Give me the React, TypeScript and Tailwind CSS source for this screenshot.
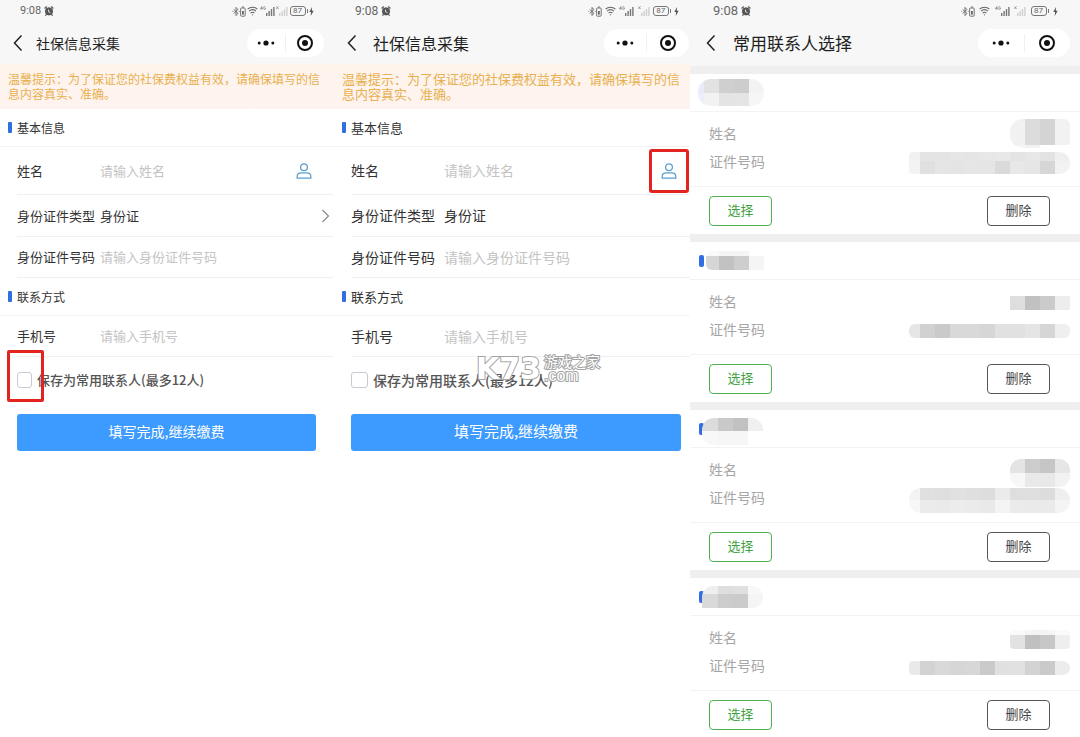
import React from 'react';
import { clsx } from 'clsx';

type Size = 'sm' | 'md' | 'lg';

const statusBar: Record<Size, string> = {
    sm: 'pl-5 pr-5 text-[11px]',
    md: 'pl-[21px] pr-[11px] text-xs',
    lg: 'pl-[23px] pr-[22px] text-[13px]',
};

const statusIcons: Record<Size, string> = {
    sm: 'w-[82px]',
    md: 'w-[91px]',
    lg: 'w-[97px]',
};

const navBar: Record<Size, string> = {
    sm: 'pl-3 pr-[10px] gap-3 h-[42px]',
    md: 'pl-3 pr-px gap-[15px] h-[42px]',
    lg: 'pl-[15px] pr-[10px] gap-4 h-11 pb-0.5',
};

const navTitle: Record<Size, string> = {
    sm: 'text-[14px]',
    md: 'text-[16px]',
    lg: 'text-[17px]',
};

const capsule: Record<Size, string> = {
    sm: 'w-[77px]',
    md: 'w-[85px]',
    lg: 'w-[92px]',
};

const SignalBars = ({ color }: { color: string }) => (
    <svg width="9" height="9" viewBox="0 0 9 9" fill={color}>
        <rect x="0" y="6" width="1.4" height="3" />
        <rect x="2.4" y="4" width="1.4" height="5" />
        <rect x="4.8" y="2" width="1.4" height="7" />
        <rect x="7.2" y="0" width="1.4" height="9" />
    </svg>
);

const StatusBar = ({ size }: { size: Size }) => (
    <div className={clsx('flex h-[22px] items-center justify-between text-[#666]', statusBar[size])}>
        <div className="flex items-center gap-[3px]">
            <span className="font-['Roboto',sans-serif]">9:08</span>
            <svg width="10" height="10" viewBox="0 0 10 10" fill="none" stroke="#555">
                <circle cx="5" cy="5.4" r="3.6" fill="#555" />
                <path d="M0.6 2.4L2.8 0.6M9.4 2.4L7.2 0.6M1.4 9.6l1.2-1.2M8.6 9.6l-1.2-1.2" strokeWidth="1.3" />
                <path d="M4.6 3.6v2.2l1.8 0.8" stroke="#f7f7f7" strokeWidth="0.9" />
            </svg>
        </div>
        <div className={clsx('flex items-center justify-between', statusIcons[size])}>
            <div className="flex items-center">
                <svg width="8" height="11" viewBox="0 0 8 11" fill="none" stroke="#666" strokeWidth="0.9">
                    <path d="M1.6 3.4l4.4 4L4 9.6V1.4L6 3.6l-4.4 4" />
                    <path d="M0.5 5.5h0.8M6.8 5.5h0.8" strokeWidth="1.1" />
                </svg>
                <svg width="6" height="11" viewBox="0 0 6 11" fill="none" stroke="#666" strokeWidth="0.9">
                    <rect x="0.6" y="2" width="4.6" height="8.2" rx="0.8" />
                    <path d="M2 1h2" />
                    <rect x="2" y="5" width="1.8" height="3.6" fill="#666" stroke="none" />
                </svg>
            </div>
            <svg width="11" height="10" viewBox="0 0 11 10" fill="none" stroke="#666" strokeWidth="1.1">
                <path d="M0.6 3.2c2.8-2.6 7-2.6 9.8 0M2.1 5.2c2-1.8 4.8-1.8 6.8 0M3.6 7.1c1.1-1 2.7-1 3.8 0" />
                <circle cx="5.5" cy="8.8" r="0.6" fill="#666" stroke="none" />
            </svg>
            <div className="flex items-end">
                <svg width="6" height="10" viewBox="0 0 6 10" fill="none" stroke="#777" strokeWidth="0.7">
                    <path d="M1.8 3.6V0.6L0.4 2.7h2M5.4 1.1c-1.2-1-2.1-0.2-2.1 1s1.2 1.9 2.1 1V2.1H4.6" />
                </svg>
                <SignalBars color="#777" />
            </div>
            <div className="flex items-end">
                <svg width="3" height="10" viewBox="0 0 3 10" stroke="#888" strokeWidth="0.8">
                    <path d="M0.3 0.4l2.2 2.6M2.5 0.4L0.3 3" />
                </svg>
                <SignalBars color="#cfcfcf" />
            </div>
            <div className="flex items-center gap-px">
                <span className="flex h-[10px] w-4 items-center justify-center rounded-[3px] border border-[#777] font-['Roboto',sans-serif] text-[8px] leading-none">
                    87
                </span>
                <span className="h-1 w-px bg-[#777]" />
            </div>
            <svg width="5" height="9" viewBox="0 0 5 9" fill="#555">
                <path d="M3 0L0.3 5h1.8L1.7 9 4.7 3.8H2.8z" />
            </svg>
        </div>
    </div>
);

const NavBar = ({ size, title }: { size: Size; title: string }) => (
    <div className={clsx('flex items-center', navBar[size])}>
        <button type="button" aria-label="返回" className="shrink-0">
            <svg width="12" height="18" viewBox="0 0 12 18" fill="none" stroke="#222" strokeWidth="1.5">
                <path d="M9.5 1.5L2.5 9l7 7.5" />
            </svg>
        </button>
        <h1 className={clsx('flex-1 whitespace-nowrap text-[#1f1f1f]', navTitle[size])}>{title}</h1>
        <div className={clsx('flex h-7 shrink-0 items-center rounded-full bg-white', capsule[size])}>
            <button type="button" aria-label="更多" className="flex flex-1 items-center justify-center">
                <svg width="18" height="6" viewBox="0 0 18 6" fill="#111">
                    <circle cx="2.2" cy="3" r="1.5" />
                    <circle cx="9" cy="3" r="2.6" />
                    <circle cx="15.8" cy="3" r="1.5" />
                </svg>
            </button>
            <span className="h-[18px] w-px bg-[#f0f0f0]" />
            <button type="button" aria-label="关闭" className="flex flex-1 items-center justify-center">
                <svg width="18" height="18" viewBox="0 0 18 18" fill="none">
                    <circle cx="9" cy="9" r="7" stroke="#111" strokeWidth="2" />
                    <circle cx="9" cy="9" r="3" fill="#111" />
                </svg>
            </button>
        </div>
    </div>
);

const PhoneHeader = ({ size, title }: { size: Size; title: string }) => (
    <header className="bg-[#f7f7f7]">
        <StatusBar size={size} />
        <NavBar size={size} title={title} />
    </header>
);

const SectionTitle = ({ wide, children }: { wide: boolean; children: React.ReactNode }) => (
    <div className="flex h-[38px] items-center gap-[5px] border-b border-[#f3f3f3] pl-2">
        <span className="h-[11px] w-1 rounded-[1px] bg-[#2f6fe0]" />
        <h2 className={clsx('text-[#333]', wide ? 'text-[13px]' : 'text-xs')}>{children}</h2>
    </div>
);

const Watermark = () => (
    <div className="pointer-events-none absolute left-[142px] -top-[5px] flex gap-[3px] text-white [-webkit-text-stroke:2px_#a3a3a3] [paint-order:stroke_fill]">
        <span className="font-['DejaVu_Sans',sans-serif] text-[30px] leading-[34px] font-bold">K73</span>
        <span className="flex flex-col">
            <span className="text-[14px] leading-[18px] whitespace-nowrap">游戏之家</span>
            <span className="font-['Liberation_Sans',sans-serif] text-base leading-3">.com</span>
        </span>
    </div>
);

const CollectForm = ({ id, wide = false }: { id: string; wide?: boolean }) => {
    const row = clsx(
        'ml-[17px] flex items-center border-b border-[#f0f0f0]',
        wide ? 'text-[14px]' : 'mr-px text-[13px]'
    );
    const label = clsx('shrink-0 whitespace-nowrap text-[#333]', wide ? 'w-[93px]' : 'w-[83px]');
    const input = 'min-w-0 flex-1 bg-transparent text-[#333] outline-none placeholder:text-[#c4c4c4]';

    return (
        <section className="min-w-0 bg-white">
            <PhoneHeader size={wide ? 'md' : 'sm'} title="社保信息采集" />

            <p
                className={clsx(
                    'bg-linear-to-b from-[#fdf4ec] to-[#fff3ef] px-2 pt-[7px] pb-2 leading-[15px] text-[#e8b04e]',
                    wide ? 'text-[13px]' : 'text-xs'
                )}
            >
                温馨提示：为了保证您的社保费权益有效，请确保填写的信息内容真实、准确。
            </p>

            <form>
                <SectionTitle wide={wide}>基本信息</SectionTitle>

                <div className={clsx(row, 'h-12', wide ? 'pr-[13px]' : 'pr-[21px]')}>
                    <label htmlFor={`${id}-name`} className={label}>姓名</label>
                    <input id={`${id}-name`} type="text" placeholder="请输入姓名" className={input} />
                    <button type="button" aria-label="选择常用联系人" className="relative shrink-0">
                        <svg width="16" height="18" viewBox="0 0 16 18" fill="none" stroke="#5b9fd0" strokeWidth="1.3">
                            <circle cx="8" cy="5.2" r="3.4" />
                            <path d="M1.2 16.2v-1.6c0-2.4 1.6-3.8 4-3.8h5.6c2.4 0 4 1.4 4 3.8v1.6z" />
                        </svg>
                        {wide && (
                            <span className="absolute -inset-x-3 -inset-y-[13px] rounded-[3px] border-3 border-[#e2231f]" />
                        )}
                    </button>
                </div>

                <div className={clsx(row, 'h-[42px] pr-[3px]')}>
                    <span id={`${id}-type`} className={label}>身份证件类型</span>
                    <button
                        type="button"
                        aria-labelledby={`${id}-type`}
                        className="flex flex-1 items-center justify-between text-[#333]"
                    >
                        身份证
                        {!wide && (
                            <svg width="9" height="14" viewBox="0 0 9 14" fill="none" stroke="#888" strokeWidth="1.2">
                                <path d="M1.5 1l6 6-6 6" />
                            </svg>
                        )}
                    </button>
                </div>

                <div className={clsx(row, 'h-[41px]')}>
                    <label htmlFor={`${id}-number`} className={label}>身份证件号码</label>
                    <input id={`${id}-number`} type="text" placeholder="请输入身份证件号码" className={input} />
                </div>

                <SectionTitle wide={wide}>联系方式</SectionTitle>

                <div className={clsx(row, 'h-[41px]')}>
                    <label htmlFor={`${id}-phone`} className={label}>手机号</label>
                    <input id={`${id}-phone`} type="tel" placeholder="请输入手机号" className={input} />
                </div>

                <div className="relative flex h-[46px] items-center gap-[5px] pl-[17px]">
                    <input
                        id={`${id}-save`}
                        type="checkbox"
                        className={clsx(
                            'h-4 shrink-0 appearance-none rounded-[3px] border border-[#c9c9d4] bg-white',
                            wide ? 'w-[17px]' : 'w-[15px]'
                        )}
                    />
                    <label
                        htmlFor={`${id}-save`}
                        className={clsx('font-medium whitespace-nowrap text-[#555]', wide ? 'text-[14px]' : 'text-[13px]')}
                    >
                        保存为常用联系人(最多12人)
                    </label>
                    {wide ? (
                        <Watermark />
                    ) : (
                        <span className="pointer-events-none absolute -top-[7px] left-[7px] h-[52px] w-[37px] rounded-[2px] border-3 border-[#e2231f]" />
                    )}
                </div>

                <div className={clsx('mt-[11px] pl-[17px]', wide ? 'pr-[9px]' : 'pr-[18px]')}>
                    <button
                        type="submit"
                        className={clsx(
                            'h-[37px] w-full rounded-[3px] bg-[#3d9bff] pb-0.5 text-white',
                            wide ? 'text-[15px]' : 'text-[14px]'
                        )}
                    >
                        填写完成,继续缴费
                    </button>
                </div>
            </form>
        </section>
    );
};

// One strip of a masked value: its height and the shade of every block
type Strip = { h: number; cells: string[] };

const Mask = ({ strips, first = 15, className }: { strips: Strip[]; first?: number; className?: string }) => (
    <div className={clsx('shrink-0 overflow-hidden', className)}>
        {strips.map((strip, i) => (
            <div key={i} className="flex" style={{ height: strip.h }}>
                {strip.cells.map((color, j) => (
                    <span
                        key={j}
                        className="w-[15px]"
                        style={{ backgroundColor: color, width: j === 0 ? first : undefined }}
                    />
                ))}
            </div>
        ))}
    </div>
);

const contacts = [
    {
        bar: false,
        title: {
            first: 6,
            className: 'rounded-[13px] -ml-px',
            strips: [
                { h: 14, cells: ['#e9ebfd', '#e2e2e2', '#cfcfcf', '#cdcdcd', '#f3f3f3'] },
                { h: 13, cells: ['#eceefb', '#f2f2f2', '#e4e4e4', '#e5e5e5', '#f6f6f6'] },
            ],
        },
        name: {
            className: 'rounded-l-[13px] rounded-r-md',
            strips: [
                { h: 26, cells: ['#f1f1f1', '#dcdcdc', '#d4d4d4', '#f2f2f2'] },
                { h: 3, cells: ['#f6f6f6', '#f3f3f3', 'transparent', 'transparent'] },
            ],
        },
        number: {
            className: 'rounded-l-sm rounded-r-[11px] mt-1',
            strips: [
                { h: 9, cells: ['#f1f1f1', '#e4e4e4', '#e4e4e4', '#e6e6e6', '#e5e5e5', '#e7e7e7', '#e8e8e8', '#e4e4e4', '#e7e7e7', '#e3e3e3', '#efefef'] },
                { h: 13, cells: ['#f3f3f3', '#e0e0e0', '#e5e5e5', '#e4e4e4', '#e6e6e6', '#e5e5e5', '#dadada', '#e8e8e8', '#e6e6e6', '#d6d6d6', '#f2f2f2'] },
            ],
        },
    },
    {
        bar: true,
        title: {
            first: 13,
            className: 'rounded-l-md ml-0.5',
            strips: [
                { h: 5, cells: ['#fafafa', '#f5f5f5', '#f5f5f5', 'transparent'] },
                { h: 14, cells: ['#d6d6d6', '#c2c2c2', '#cecece', '#f5f5f5'] },
            ],
        },
        name: {
            className: 'mt-1',
            strips: [
                { h: 14, cells: ['#dedede', '#c1c1c1', '#cbcbcb', '#ededed'] },
            ],
        },
        number: {
            className: 'rounded-l-md rounded-r-md mt-1',
            strips: [
                { h: 14, cells: ['#e6e6e6', '#d1d1d1', '#cacaca', '#d9d9d9', '#d9d9d9', '#d6d6d6', '#e1e1e1', '#e1e1e1', '#e5e5e5', '#d6d6d6', '#efefef'] },
            ],
        },
    },
    {
        bar: true,
        title: {
            first: 16,
            className: 'rounded-[12px] -ml-0.5 mt-1.5',
            strips: [
                { h: 13, cells: ['#dcdcdc', '#c9c9c9', '#c1c1c1', '#f0f0f0'] },
                { h: 14, cells: ['#f8f8f8', '#f6f6f6', '#f6f6f6', 'transparent'] },
            ],
        },
        name: {
            className: 'rounded-[11px] mt-2',
            strips: [
                { h: 14, cells: ['#e4e4e4', '#cccccc', '#c6c6c6', '#e6e6e6'] },
                { h: 14, cells: ['#f7f7f7', '#e9e9e9', '#e8e8e8', '#f2f2f2'] },
            ],
        },
        number: {
            className: 'rounded-[12px] mt-1.5',
            strips: [
                { h: 12, cells: ['#f3f3f3', '#e0e0e0', '#dedede', '#e1e1e1', '#dfdfdf', '#dddddd', '#ebebeb', '#dedede', '#dedede', '#dcdcdc', '#efefef'] },
                { h: 13, cells: ['#f7f7f7', '#ebebeb', '#eaeaea', '#ececec', '#ebebeb', '#e9e9e9', '#f4f4f4', '#ebebeb', '#eaeaea', '#eaeaea', '#f4f4f4'] },
            ],
        },
    },
    {
        bar: true,
        title: {
            first: 16,
            className: 'rounded-tl-[12px] rounded-r-[12px] -ml-0.5',
            strips: [
                { h: 8, cells: ['#efefef', '#dedede', '#e0e0e0', '#f8f8f8'] },
                { h: 14, cells: ['#d9d9d9', '#cccccc', '#cbcbcb', '#f5f5f5'] },
            ],
        },
        name: {
            className: 'rounded-sm mt-1',
            strips: [
                { h: 5, cells: ['#fafafa', '#f4f4f4', '#f4f4f4', '#fafafa'] },
                { h: 14, cells: ['#e2e2e2', '#c0c0c0', '#c7c7c7', '#eeeeee'] },
            ],
        },
        number: {
            className: 'rounded-l-sm rounded-r-[7px] mt-1.5',
            strips: [
                { h: 14, cells: ['#e9e9e9', '#d3d3d3', '#d9d9d9', '#d6d6d6', '#d7d7d7', '#cacaca', '#e0e0e0', '#e1e1e1', '#d3d3d3', '#cacaca', '#ececec'] },
            ],
        },
    },
];

const ContactList = () => (
    <section className="min-w-0 bg-white">
        <PhoneHeader size="lg" title="常用联系人选择" />

        <ul>
            {contacts.map((item, index) => (
                <li key={index} className="group border-t-8 border-[#efefef]">
                    <div className="flex h-[38px] items-center border-b border-[#f3f3f3] pl-[9px]">
                        {item.bar && <span className="h-3 w-[5px] rounded-[2px] bg-[#2f6fe0]" />}
                        <Mask {...item.title} />
                    </div>

                    <dl className="border-b border-[#f3f3f3] pt-[7px] pr-[10px] pb-[11px] pl-[19px] text-[14px] text-[#a6a6a6]">
                        <div className="flex h-7 items-center justify-between">
                            <dt>姓名</dt>
                            <dd><Mask {...item.name} /></dd>
                        </div>
                        <div className="flex h-7 items-center justify-between">
                            <dt>证件号码</dt>
                            <dd><Mask {...item.number} first={11} /></dd>
                        </div>
                    </dl>

                    <div className="flex justify-between pt-[9px] pr-[30px] pb-2 pl-[19px] text-[13px] group-last:pb-1">
                        <button type="button" className="h-[30px] w-[63px] rounded border border-[#4caf50] pb-0.5 text-[#3fa243]">
                            选择
                        </button>
                        <button type="button" className="h-[30px] w-[63px] rounded border border-[#555] pb-0.5 text-[#444]">
                            删除
                        </button>
                    </div>
                </li>
            ))}
        </ul>
    </section>
);

export default function App() {
    return (
        <main className="grid min-h-screen grid-cols-[334fr_356fr_390fr] bg-white font-['Noto_Sans_CJK_SC',sans-serif]">
            <CollectForm id="first" />
            <CollectForm id="second" wide />
            <ContactList />
        </main>
    );
}
